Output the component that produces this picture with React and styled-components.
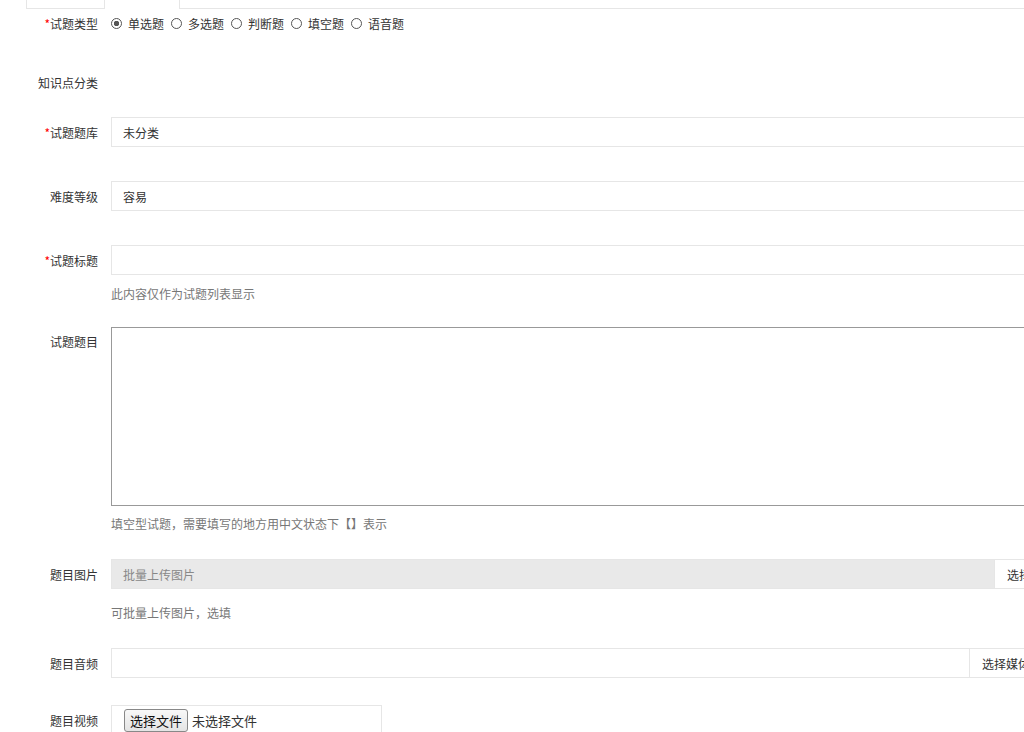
import styled, { createGlobalStyle } from "styled-components";

const Global = createGlobalStyle`
  body { margin: 0; overflow: hidden; background: #fff; font-family: "Noto Sans CJK SC", sans-serif; font-size: 12px; color: #333; }
`;

const Page = styled.div`
  width: 1140px;
`;

const Tabs = styled.div`
  display: flex;
  height: 9px;
`;

const Tab = styled.div`
  width: ${(p) => p.w}px;
  box-sizing: border-box;
  border: 1px solid #e6e6e6;
  border-top: none;
  border-bottom: ${(p) => (p.active ? "none" : "1px solid #e6e6e6")};
  border-left: ${(p) => (p.first ? "1px solid #e6e6e6" : "none")};
  margin-left: ${(p) => (p.first ? 26 : 0)}px;
  flex: ${(p) => (p.fill ? 1 : "none")};
`;

const Form = styled.div`
  display: flex;
  flex-direction: column;
`;

const Row = styled.div`
  display: flex;
  align-items: ${(p) => (p.top ? "flex-start" : "center")};
  margin-top: ${(p) => p.mt || 0}px;
  min-height: ${(p) => p.h || 30}px;
`;

const Label = styled.div`
  width: 98px;
  padding-right: 13px;
  text-align: right;
  flex: none;
  line-height: ${(p) => (p.top ? "30px" : "normal")};
  & b { color: #f00; font-weight: normal; }
`;

const Box = styled.div`
  flex: ${(p) => (p.w ? "none" : 1)};
  width: ${(p) => (p.w ? p.w + "px" : "auto")};
  height: ${(p) => p.h || 30}px;
  box-sizing: border-box;
  border: 1px solid ${(p) => (p.dark ? "#999" : "#e6e6e6")};
  background: ${(p) => (p.grey ? "#e9e9e9" : "#fff")};
  color: ${(p) => (p.grey ? "#888" : "#333")};
  display: flex;
  align-items: center;
  padding-left: ${(p) => (p.pl ?? 11)}px;
  gap: 4px;
`;

const Addon = styled.div`
  height: 30px;
  box-sizing: border-box;
  border: 1px solid #e6e6e6;
  border-left: none;
  padding: 0 12px;
  display: flex;
  align-items: center;
  white-space: nowrap;
`;

const Hint = styled.div`
  margin: ${(p) => p.mt}px 0 0 111px;
  color: #777;
`;

const Radios = styled.div`
  display: flex;
  gap: 7px;
`;

const Radio = styled.span`
  display: inline-flex;
  align-items: center;
  gap: 6px;
  &::before {
    content: "";
    width: 11px;
    height: 11px;
    box-sizing: border-box;
    border-radius: 50%;
    border: 1px solid #555;
    background: ${(p) => (p.on ? "radial-gradient(circle, #555 2.5px, #fff 3px)" : "#fff")};
  }
`;

const FileBtn = styled.span`
  border: 1px solid #888;
  border-radius: 3px;
  background: linear-gradient(#f8f8f8, #e4e4e4);
  padding: 1px 5px;
  font-size: 13px;
  color: #111;
`;

export default function App() {
  const types = ["单选题", "多选题", "判断题", "填空题", "语音题"];
  return (
    <Page>
      <Global />
      <Tabs>
        <Tab first w={79} />
        <Tab active w={75} />
        <Tab fill />
      </Tabs>
      <Form>
        <Row mt={0} h={28}>
          <Label><b>*</b>试题类型</Label>
          <Radios>
            {types.map((t, i) => <Radio key={t} on={i === 0}>{t}</Radio>)}
          </Radios>
        </Row>
        <Row mt={30} h={30}>
          <Label>知识点分类</Label>
        </Row>
        <Row mt={20}>
          <Label><b>*</b>试题题库</Label>
          <Box>未分类</Box>
        </Row>
        <Row mt={34}>
          <Label>难度等级</Label>
          <Box>容易</Box>
        </Row>
        <Row mt={34}>
          <Label><b>*</b>试题标题</Label>
          <Box />
        </Row>
        <Hint mt={10}>此内容仅作为试题列表显示</Hint>
        <Row mt={25} top>
          <Label top>试题题目</Label>
          <Box h={179} dark />
        </Row>
        <Hint mt={9}>填空型试题，需要填写的地方用中文状态下【】表示</Hint>
        <Row mt={27}>
          <Label>题目图片</Label>
          <Box grey w={884}>批量上传图片</Box>
          <Addon>选择图片</Addon>
        </Row>
        <Hint mt={15}>可批量上传图片，选填</Hint>
        <Row mt={27}>
          <Label>题目音频</Label>
          <Box w={859} />
          <Addon>选择媒体</Addon>
        </Row>
        <Row mt={27}>
          <Label>题目视频</Label>
          <Box w={271} pl={12}>
            <FileBtn>选择文件</FileBtn>
            <span style={{ fontSize: 13 }}>未选择文件</span>
          </Box>
        </Row>
      </Form>
    </Page>
  );
}
